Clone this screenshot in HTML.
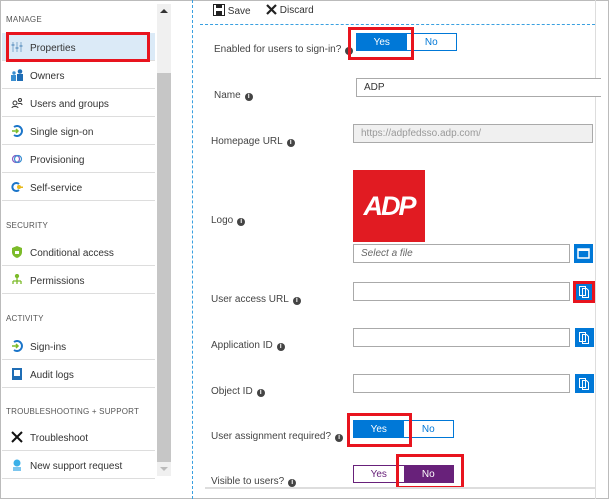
<!DOCTYPE html>
<html><head><meta charset="utf-8"><style>
*{margin:0;padding:0;box-sizing:border-box}
body{width:609px;height:499px;background:#fff;font-family:"Liberation Sans",sans-serif;font-size:10px;color:#333;position:relative;overflow:hidden}
.a{position:absolute}
.sec{position:absolute;left:6px;font-size:8px;color:#555;letter-spacing:.2px}
.item{position:absolute;left:2px;width:153px;height:28px;border-bottom:1px solid #ddd;line-height:28px;padding-top:2px;padding-left:28px;font-size:10px;color:#333}
.ic{position:absolute;left:9px;top:8px;width:12px;height:12px;display:block}
.ic svg{display:block}
.lbl{position:absolute;font-size:10px;color:#444}
.info{display:inline-block;width:8px;height:8px;border-radius:50%;background:#444;color:#fff;font-size:7px;line-height:8px;text-align:center;font-weight:bold;margin-left:4px;vertical-align:0}
.inp{position:absolute;border:1px solid #aaa;background:#fff;height:19px;font-size:10px;line-height:17px;padding-left:7px}
.btn{position:absolute;width:19px;height:19px;background:#0078d7}
.tg{position:absolute;height:18px;display:flex;font-size:10px}
.tg div{flex:1;text-align:center;line-height:17px}
.red{position:absolute;border:3px solid #e8141e}
</style></head><body>
<div class="a" style="left:0;top:0;width:609px;height:499px;border:1px solid #bbb"></div>
<div class="sec" style="top:15px">MANAGE</div>
<div class="item" style="top:33px;background:#dbeaf7"><span class="ic"><svg width="12" height="12" stroke="#8fb4d4" stroke-width="1.2"><path d="M2 1v10M6 1v10M10 1v10"/><path d="M0.5 4h3M4.5 7h3M8.5 5h3" stroke="#5a8fbf"/></svg></span>Properties</div>
<div class="item" style="top:61px"><span class="ic"><svg width="12" height="12"><rect x="0" y="6" width="5" height="6" fill="#3a8fd1"/><rect x="6" y="5" width="6" height="7" fill="#1f6db5"/><circle cx="9" cy="2.5" r="2.3" fill="#1f6db5"/><circle cx="3" cy="4" r="1.7" fill="#3a8fd1"/></svg></span>Owners</div>
<div class="item" style="top:89px"><span class="ic"><svg width="12" height="12" fill="none" stroke="#333" stroke-width="1"><circle cx="4" cy="6" r="2"/><path d="M1 11c0-2 6-2 6 0"/><circle cx="9" cy="3" r="1.5"/><path d="M7 7c1-1 4-1 4 1"/></svg></span>Users and groups</div>
<div class="item" style="top:117px"><span class="ic"><svg width="12" height="12"><path d="M3 2a5 5 0 1 1 0 8" fill="none" stroke="#1b75c9" stroke-width="2"/><path d="M1 6h6M5 4l2 2-2 2" stroke="#7cbb2a" stroke-width="1.5" fill="none"/></svg></span>Single sign-on</div>
<div class="item" style="top:145px"><span class="ic"><svg width="12" height="12" fill="none" stroke-width="1.2"><circle cx="5" cy="6" r="3.5" stroke="#8a5cc4"/><circle cx="7" cy="6" r="3.5" stroke="#3a8fd1"/></svg></span>Provisioning</div>
<div class="item" style="top:173px"><span class="ic"><svg width="12" height="12"><path d="M8 3a4 4 0 1 0 0 6" fill="none" stroke="#1b75c9" stroke-width="2"/><circle cx="8" cy="6" r="2" fill="#e8b81a"/><rect x="8" y="5.5" width="4" height="1.5" fill="#e8b81a"/></svg></span>Self-service</div>
<div class="sec" style="top:221px">SECURITY</div>
<div class="item" style="top:238px"><span class="ic"><svg width="12" height="12"><path d="M6 0l5 2v4c0 3-2 5-5 6-3-1-5-3-5-6V2z" fill="#7cbb2a"/><rect x="4" y="5" width="4" height="3" fill="#fff"/></svg></span>Conditional access</div>
<div class="item" style="top:266px"><span class="ic"><svg width="12" height="12" stroke="#7cbb2a" fill="none" stroke-width="1.3"><circle cx="6" cy="2" r="1.5" fill="#7cbb2a"/><path d="M6 3v4M2 7h8M2 7v3M10 7v3M6 7v3"/></svg></span>Permissions</div>
<div class="sec" style="top:314px">ACTIVITY</div>
<div class="item" style="top:332px"><span class="ic"><svg width="12" height="12"><path d="M3 2a5 5 0 1 1 0 8" fill="none" stroke="#1b75c9" stroke-width="2"/><path d="M1 6h6M5 4l2 2-2 2" stroke="#7cbb2a" stroke-width="1.5" fill="none"/></svg></span>Sign-ins</div>
<div class="item" style="top:360px"><span class="ic"><svg width="12" height="12"><rect x="1" y="0" width="10" height="12" fill="#1f6db5"/><rect x="3" y="2" width="6" height="6" fill="#fff"/></svg></span>Audit logs</div>
<div class="sec" style="top:407px">TROUBLESHOOTING + SUPPORT</div>
<div class="item" style="top:423px"><span class="ic"><svg width="12" height="12" stroke="#111" stroke-width="2"><path d="M1 1l10 10M11 1L1 11"/></svg></span>Troubleshoot</div>
<div class="item" style="top:451px"><span class="ic"><svg width="12" height="12"><circle cx="6" cy="4" r="3.5" fill="#3ab0e8"/><rect x="2" y="8" width="8" height="4" fill="#7cc6ee"/></svg></span>New support request</div>
<div class="red" style="left:6px;top:32px;width:144px;height:30px"></div>
<div class="a" style="left:157px;top:4px;width:14px;height:472px;background:#f0f0f0"></div>
<div class="a" style="left:157px;top:73px;width:14px;height:389px;background:#c6c6c6"></div>
<div class="a" style="left:160px;top:9px;border:4px solid transparent;border-bottom:4px solid #333;border-top:0"></div>
<div class="a" style="left:160px;top:467px;border:4px solid transparent;border-top:4px solid #bbb;border-bottom:0"></div>
<div class="a" style="left:192px;top:0;width:1px;height:499px;border-left:1px dashed #3aa0e0"></div>
<div class="a" style="left:213px;top:4px;font-size:10px"><svg width="12" height="12" style="vertical-align:-2px"><rect x="0.5" y="0.5" width="11" height="11" fill="none" stroke="#222"/><rect x="3" y="1" width="6" height="3" fill="#222"/><rect x="3" y="7" width="6" height="5" fill="#222"/></svg> Save</div>
<div class="a" style="left:266px;top:4px;font-size:10px"><svg width="11" height="11" style="vertical-align:-2px" stroke="#222" stroke-width="2.2"><path d="M1 1l9 9M10 1l-9 9"/></svg> Discard</div>
<div class="a" style="left:200px;top:24px;width:395px;border-top:1px dashed #3aa0e0"></div>
<div class="a" style="left:595px;top:0;width:1px;height:499px;background:#ddd"></div>
<div class="lbl" style="left:214px;top:44px">Enabled for users to sign-in?<span class="info">i</span></div>
<div class="tg" style="left:356px;top:33px;width:101px;border:1px solid #0078d7"><div style="background:#0078d7;color:#fff">Yes</div><div style="color:#0078d7">No</div></div>
<div class="red" style="left:348px;top:27px;width:66px;height:33px"></div>
<div class="lbl" style="left:214px;top:90px">Name<span class="info">i</span></div>
<div class="inp" style="left:356px;top:78px;width:245px;border-right:none">ADP</div>
<div class="lbl" style="left:211px;top:136px">Homepage URL<span class="info">i</span></div>
<div class="inp" style="left:353px;top:124px;width:240px;background:#f0f0f0;color:#999">https://adpfedsso.adp.com/</div>
<div class="a" style="left:353px;top:170px;width:72px;height:72px;background:#e11b22;color:#fff;font-weight:bold;font-style:italic;font-size:27px;line-height:72px;text-align:center;letter-spacing:-2px">ADP</div>
<div class="lbl" style="left:211px;top:215px">Logo<span class="info">i</span></div>
<div class="inp" style="left:353px;top:244px;width:217px;color:#666;font-style:italic">Select a file</div>
<div class="btn" style="left:574px;top:244px"><svg width="19" height="19"><rect x="4" y="5" width="11" height="9" fill="none" stroke="#fff" stroke-width="1.5"/><rect x="4" y="5" width="11" height="2" fill="#fff"/></svg></div>
<div class="lbl" style="left:211px;top:294px">User access URL<span class="info">i</span></div>
<div class="inp" style="left:353px;top:282px;width:217px"></div>
<div class="lbl" style="left:211px;top:340px">Application ID<span class="info">i</span></div>
<div class="inp" style="left:353px;top:328px;width:217px"></div>
<div class="lbl" style="left:211px;top:386px">Object ID<span class="info">i</span></div>
<div class="inp" style="left:353px;top:374px;width:217px"></div>
<div class="btn" style="left:575px;top:282px"><svg width="19" height="19" fill="none" stroke="#fff"><rect x="4.5" y="4.5" width="6" height="9"/><path d="M7.5 6.5h4l2 2v7h-6z"/></svg></div>
<div class="btn" style="left:575px;top:328px"><svg width="19" height="19" fill="none" stroke="#fff"><rect x="4.5" y="4.5" width="6" height="9"/><path d="M7.5 6.5h4l2 2v7h-6z"/></svg></div>
<div class="btn" style="left:575px;top:374px"><svg width="19" height="19" fill="none" stroke="#fff"><rect x="4.5" y="4.5" width="6" height="9"/><path d="M7.5 6.5h4l2 2v7h-6z"/></svg></div>
<div class="red" style="left:573px;top:281px;width:22px;height:22px"></div>
<div class="lbl" style="left:211px;top:431px">User assignment required?<span class="info">i</span></div>
<div class="tg" style="left:353px;top:420px;width:101px;border:1px solid #0078d7"><div style="background:#0078d7;color:#fff">Yes</div><div style="color:#0078d7">No</div></div>
<div class="red" style="left:347px;top:413px;width:65px;height:34px"></div>
<div class="lbl" style="left:211px;top:476px">Visible to users?<span class="info">i</span></div>
<div class="tg" style="left:353px;top:465px;width:101px;border:1px solid #68217a"><div style="color:#68217a">Yes</div><div style="background:#68217a;color:#fff">No</div></div>
<div class="red" style="left:396px;top:454px;width:68px;height:35px"></div>
<div class="a" style="left:205px;top:487px;width:390px;height:2px;background:#ddd"></div>
</body></html>
